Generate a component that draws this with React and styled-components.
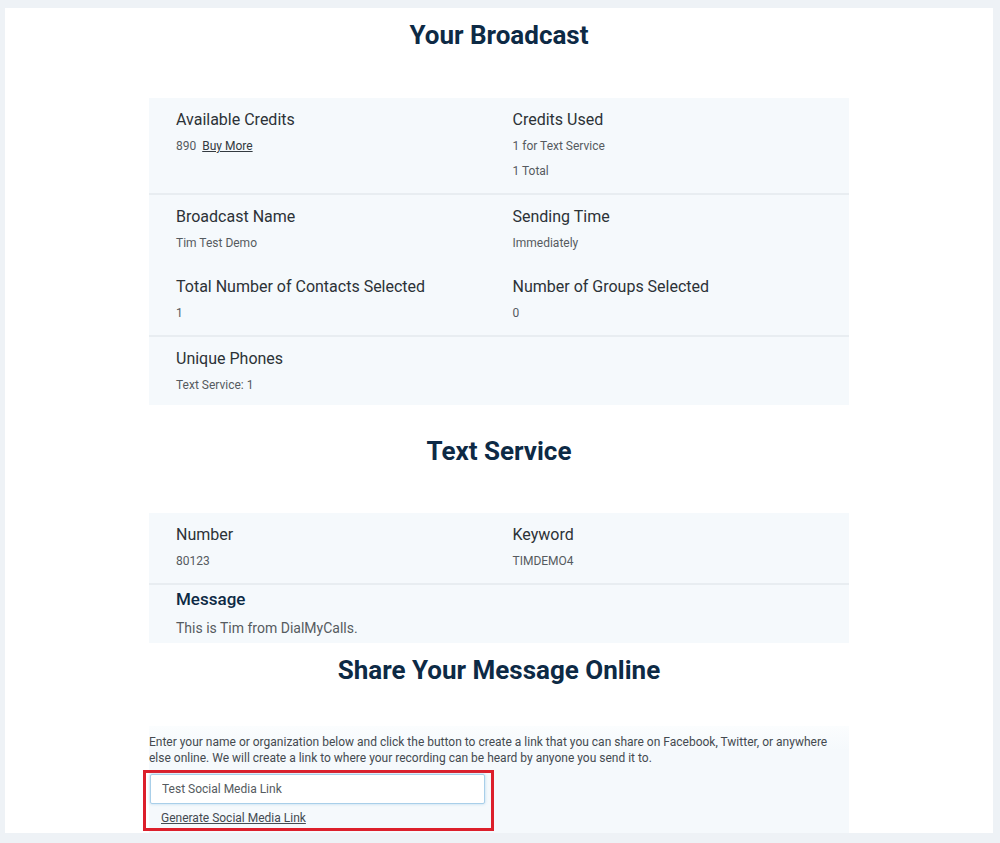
import React, { useState } from 'react'
import styled, { createGlobalStyle } from 'styled-components'

const GlobalStyle = createGlobalStyle`
  html, body {
    margin: 0;
    background: #eef2f6;
  }
  body {
    padding: 8px 7px 0 5px;
    font-family: Roboto, "Liberation Sans", Arial, sans-serif;
  }
`

const Card = styled.main`
  background: #fff;
  padding-top: 9px;
  display: flex;
  flex-direction: column;
  align-items: center;
`

const Heading = styled.h1`
  margin: ${p => p.$first ? '0 0 45px' : p.$tight ? '9px 0 38px' : '28px 0 44px'};
  font-size: 26px;
  line-height: 36px;
  font-weight: 700;
  color: #0d2a45;
  text-align: center;
`

const Item = styled.div`
  padding: 10px 0 9px;
`

const Row = styled.div`
  display: grid;
  grid-template-columns: 1fr 1fr;
  padding-left: 27px;
  & + & {
    border-top: 2px solid #e8edf1;
  }
  &:last-child ${Item} {
    padding-bottom: 7px;
  }
`

const Panel = styled.section`
  width: 700px;
  background: #f5f9fc;
`

const Label = styled.div`
  margin-bottom: 2px;
  font-size: 16px;
  line-height: 24px;
  font-weight: 400;
  color: #2c3237;
`

const Value = styled.div`
  font-size: 12px;
  line-height: 25px;
  color: #555b60;
`

const PlainLink = styled.a`
  margin-left: 3px;
  color: #333a40;
  text-decoration: underline;
  cursor: pointer;
`

const MessageBlock = styled.div`
  padding: 2px 0 2px 27px;
  border-top: 2px solid #e8edf1;
`

const MessageLabel = styled.div`
  font-size: 17px;
  line-height: 24px;
  font-weight: 500;
  color: #0d2a45;
`

const MessageText = styled.div`
  margin-top: 4px;
  font-size: 14px;
  line-height: 26px;
  color: #555b60;
`

const ShareBox = styled.section`
  width: 700px;
  padding: 8px 0 2px;
  background: linear-gradient(#fbfdfe, #f5f9fc 24px);
`

const Intro = styled.p`
  margin: 0;
  font-size: 12px;
  line-height: 16px;
  color: #444a50;
`

const Highlight = styled.div`
  width: 338px;
  margin: 4px 0 0 -6px;
  padding: 1px 3px 0 4px;
  border: 3px solid #dc1f2b;
`

const NameInput = styled.input`
  display: block;
  box-sizing: border-box;
  width: 335px;
  height: 30px;
  padding: 0 11px;
  border: 1px solid #a9cfe9;
  border-radius: 2px;
  box-shadow: 0 0 3px rgba(102, 170, 220, 0.45);
  background: #fff;
  font-family: inherit;
  font-size: 12px;
  color: #555b60;
  outline: none;
`

const GenerateLink = styled.a`
  display: block;
  margin: 4px 0 0 11px;
  font-size: 12px;
  line-height: 20px;
  color: #444a50;
  text-decoration: underline;
  cursor: pointer;
`

export default function App() {
  const [name, setName] = useState('Test Social Media Link')

  return (
    <>
      <GlobalStyle />
      <Card>
        <Heading $first>Your Broadcast</Heading>
        <Panel>
          <Row>
            <Item>
              <Label>Available Credits</Label>
              <Value>890 <PlainLink>Buy More</PlainLink></Value>
            </Item>
            <Item>
              <Label>Credits Used</Label>
              <Value>1 for Text Service</Value>
              <Value>1 Total</Value>
            </Item>
          </Row>
          <Row>
            <Item>
              <Label>Broadcast Name</Label>
              <Value>Tim Test Demo</Value>
            </Item>
            <Item>
              <Label>Sending Time</Label>
              <Value>Immediately</Value>
            </Item>
            <Item>
              <Label>Total Number of Contacts Selected</Label>
              <Value>1</Value>
            </Item>
            <Item>
              <Label>Number of Groups Selected</Label>
              <Value>0</Value>
            </Item>
          </Row>
          <Row>
            <Item>
              <Label>Unique Phones</Label>
              <Value>Text Service: 1</Value>
            </Item>
          </Row>
        </Panel>

        <Heading>Text Service</Heading>
        <Panel>
          <Row>
            <Item>
              <Label>Number</Label>
              <Value>80123</Value>
            </Item>
            <Item>
              <Label>Keyword</Label>
              <Value>TIMDEMO4</Value>
            </Item>
          </Row>
          <MessageBlock>
            <MessageLabel>Message</MessageLabel>
            <MessageText>This is Tim from DialMyCalls.</MessageText>
          </MessageBlock>
        </Panel>

        <Heading $tight>Share Your Message Online</Heading>
        <ShareBox>
          <Intro>
            Enter your name or organization below and click the button to create a link that you can share on Facebook, Twitter, or anywhere else online. We will create a link to where your recording can be heard by anyone you send it to.
          </Intro>
          <Highlight>
            <NameInput value={name} onChange={e => setName(e.target.value)} />
            <GenerateLink>Generate Social Media Link</GenerateLink>
          </Highlight>
        </ShareBox>
      </Card>
    </>
  )
}
